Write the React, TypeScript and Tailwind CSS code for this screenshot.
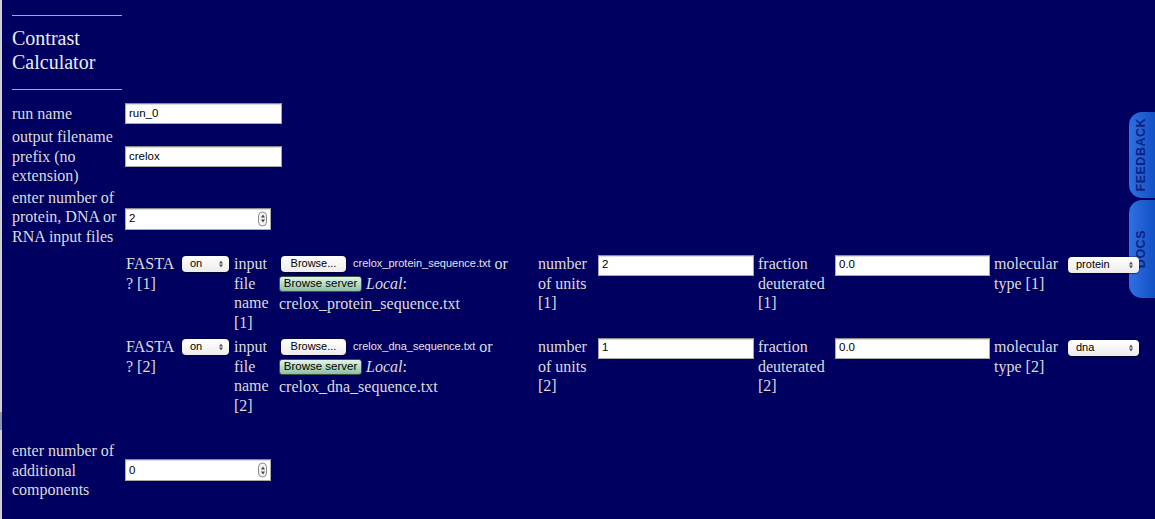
import React from 'react';

const serif = "font-['Liberation_Serif','Times_New_Roman',serif]";
const sans = "font-['Liberation_Sans',Arial,sans-serif]";

// small aqua-style spinner used on number inputs
function Spinner() {
    return (
        <span className="absolute right-[3px] top-1/2 -translate-y-1/2 flex h-[15px] w-[9px] flex-col items-center justify-center gap-[2px] rounded-full border border-[#8a8a8a] bg-[#f4f4f4]">
            <span className="h-0 w-0 border-x-[2px] border-b-[3px] border-x-transparent border-b-[#444]" />
            <span className="h-0 w-0 border-x-[2px] border-t-[3px] border-x-transparent border-t-[#444]" />
        </span>
    );
}

function TextInput({ value, width = 'w-[157px]', number = false, className = '' }: { value: string; width?: string; number?: boolean; className?: string }) {
    return (
        <div className={`relative flex items-center ${width} ${number ? 'h-[22px]' : 'h-[21px]'} border border-[#a9a9a9] border-t-[#8c8c8c] bg-white pl-[3px] shadow-[inset_0_1px_1px_rgba(0,0,0,0.15)] ${className}`}>
            <span className={`${sans} text-[11.5px] text-black`}>{value}</span>
            {number && <Spinner />}
        </div>
    );
}

function AquaSelect({ value, width }: { value: string; width: string }) {
    return (
        <div className={`relative flex h-[16px] ${width} items-center rounded-[4px] bg-gradient-to-b from-white to-[#ececec] pl-[8px] shadow-[0_0_0_1px_rgba(0,0,0,0.25),0_1px_1px_rgba(0,0,0,0.3)]`}>
            <span className={`${sans} text-[11px] text-black leading-none`}>{value}</span>
            <span className="absolute right-[6px] top-1/2 flex -translate-y-1/2 flex-col items-center gap-[1px]">
                <span className="h-0 w-0 border-x-[2px] border-b-[3px] border-x-transparent border-b-[#555]" />
                <span className="h-0 w-0 border-x-[2px] border-t-[3px] border-x-transparent border-t-[#555]" />
            </span>
        </div>
    );
}

function FileCell({ file }: { file: string }) {
    return (
        <div className="flex flex-col">
            <div className="flex h-[20px] items-center">
                <button type="button" className={`ml-[2px] flex h-[16px] w-[65px] items-center justify-center rounded-[4px] bg-gradient-to-b from-white to-[#ededed] ${sans} text-[11px] text-black shadow-[0_0_0_1px_rgba(0,0,0,0.25),0_1px_1px_rgba(0,0,0,0.3)]`}>
                    Browse...
                </button>
                <span className={`ml-[7px] ${sans} text-[11px] text-[#e4e4e4]`}>{file}</span>
                <span className={`ml-[4px] ${serif} text-[16px] text-[#dcdcdc]`}>or</span>
            </div>
            <div className="flex h-[20px] items-center">
                <button type="button" className={`flex h-[16px] w-[83px] items-center justify-center rounded-[3px] border border-[#3c5046] bg-gradient-to-b from-[#e2f5e9] via-[#b4dcc4] to-[#8cbea2] ${sans} text-[11.5px] text-black`}>
                    Browse server
                </button>
                <span className={`ml-[4px] ${serif} text-[16px] text-[#dcdcdc]`}>
                    <i>Local</i>:
                </span>
            </div>
            <div className={`${serif} text-[16px] leading-[19.5px] text-[#dcdcdc]`}>{file}</div>
        </div>
    );
}

const components = [
    { n: 1, file: 'crelox_protein_sequence.txt', units: '2', type: 'protein' },
    { n: 2, file: 'crelox_dna_sequence.txt', units: '1', type: 'dna' },
];

export default function App() {
    return (
        <div className={`relative flex h-[519px] w-full overflow-hidden bg-[#000060] ${serif} text-[16px] leading-[19.5px] text-[#dcdcdc]`}>
            {/* left window edge */}
            <div className="flex w-[2px] shrink-0 flex-col bg-[#cfcfd4]">
                <div className="mt-[412px] h-[18px] bg-[#8e96b0]" />
            </div>

            <div className="flex flex-col pl-[10px] pt-[15px]">
                <div className="h-px w-[110px] bg-[#a8a8b8]" />
                <h2 className="mt-[10px] text-[20px] leading-[24px] text-[#e8f0f0]">
                    Contrast
                    <br />
                    Calculator
                </h2>
                <div className="mt-[15px] h-px w-[110px] bg-[#a8a8b8]" />

                <div className="mt-[12px] grid grid-cols-[113px_auto] items-center gap-y-[2px]">
                    <div>run name</div>
                    <TextInput value="run_0" className="my-px" />

                    <div>output filename prefix (no extension)</div>
                    <TextInput value="crelox" />

                    <div>enter number of protein, DNA or RNA input files</div>
                    <TextInput value="2" width="w-[146px]" number className="mt-[4px]" />

                    <div />
                    <div className="relative z-10 mt-[6px] grid grid-cols-[56px_52px_45px_259px_60px_160px_77px_159px_74px_71px] items-start gap-y-[5px] pl-px">
                        {components.map((c) => (
                            <React.Fragment key={c.n}>
                                <div className="pr-[2px]">FASTA ? [{c.n}]</div>
                                <div className="mt-[1.5px]">
                                    <AquaSelect value="on" width="w-[47px]" />
                                </div>
                                <div className="pr-[2px]">input file name [{c.n}]</div>
                                <FileCell file={c.file} />
                                <div className="pr-[2px]">number of units [{c.n}]</div>
                                <TextInput value={c.units} width="w-[156px]" className="mt-[0.5px]" />
                                <div className="pr-[2px]">fraction deuterated [{c.n}]</div>
                                <TextInput value="0.0" width="w-[155px]" className="mt-[0.5px]" />
                                <div className="pr-[2px]">molecular type [{c.n}]</div>
                                <div className="mt-[2.5px]">
                                    <AquaSelect value={c.type} width="w-[71px]" />
                                </div>
                            </React.Fragment>
                        ))}
                    </div>

                    <div className="mt-[24px]">enter number of additional components</div>
                    <TextInput value="0" width="w-[146px]" number className="mt-[24px]" />
                </div>
            </div>

            {/* side tabs */}
            <div className="absolute right-0 top-[112px] flex h-[86px] w-[26px] items-center justify-center rounded-l-[13px] bg-gradient-to-r from-[#2f70e2] to-[#1150c4]">
                <span className={`${sans} rotate-180 text-[12.5px] font-bold tracking-[0.5px] text-[#0b2480] [writing-mode:vertical-rl]`}>FEEDBACK</span>
            </div>
            <div className="absolute right-0 top-[200px] flex h-[98px] w-[26px] items-center justify-center rounded-l-[13px] bg-gradient-to-r from-[#2f70e2] to-[#1150c4]">
                <span className={`${sans} rotate-180 text-[12.5px] font-bold tracking-[0.5px] text-[#0b2480] [writing-mode:vertical-rl]`}>DOCS</span>
            </div>
        </div>
    );
}
